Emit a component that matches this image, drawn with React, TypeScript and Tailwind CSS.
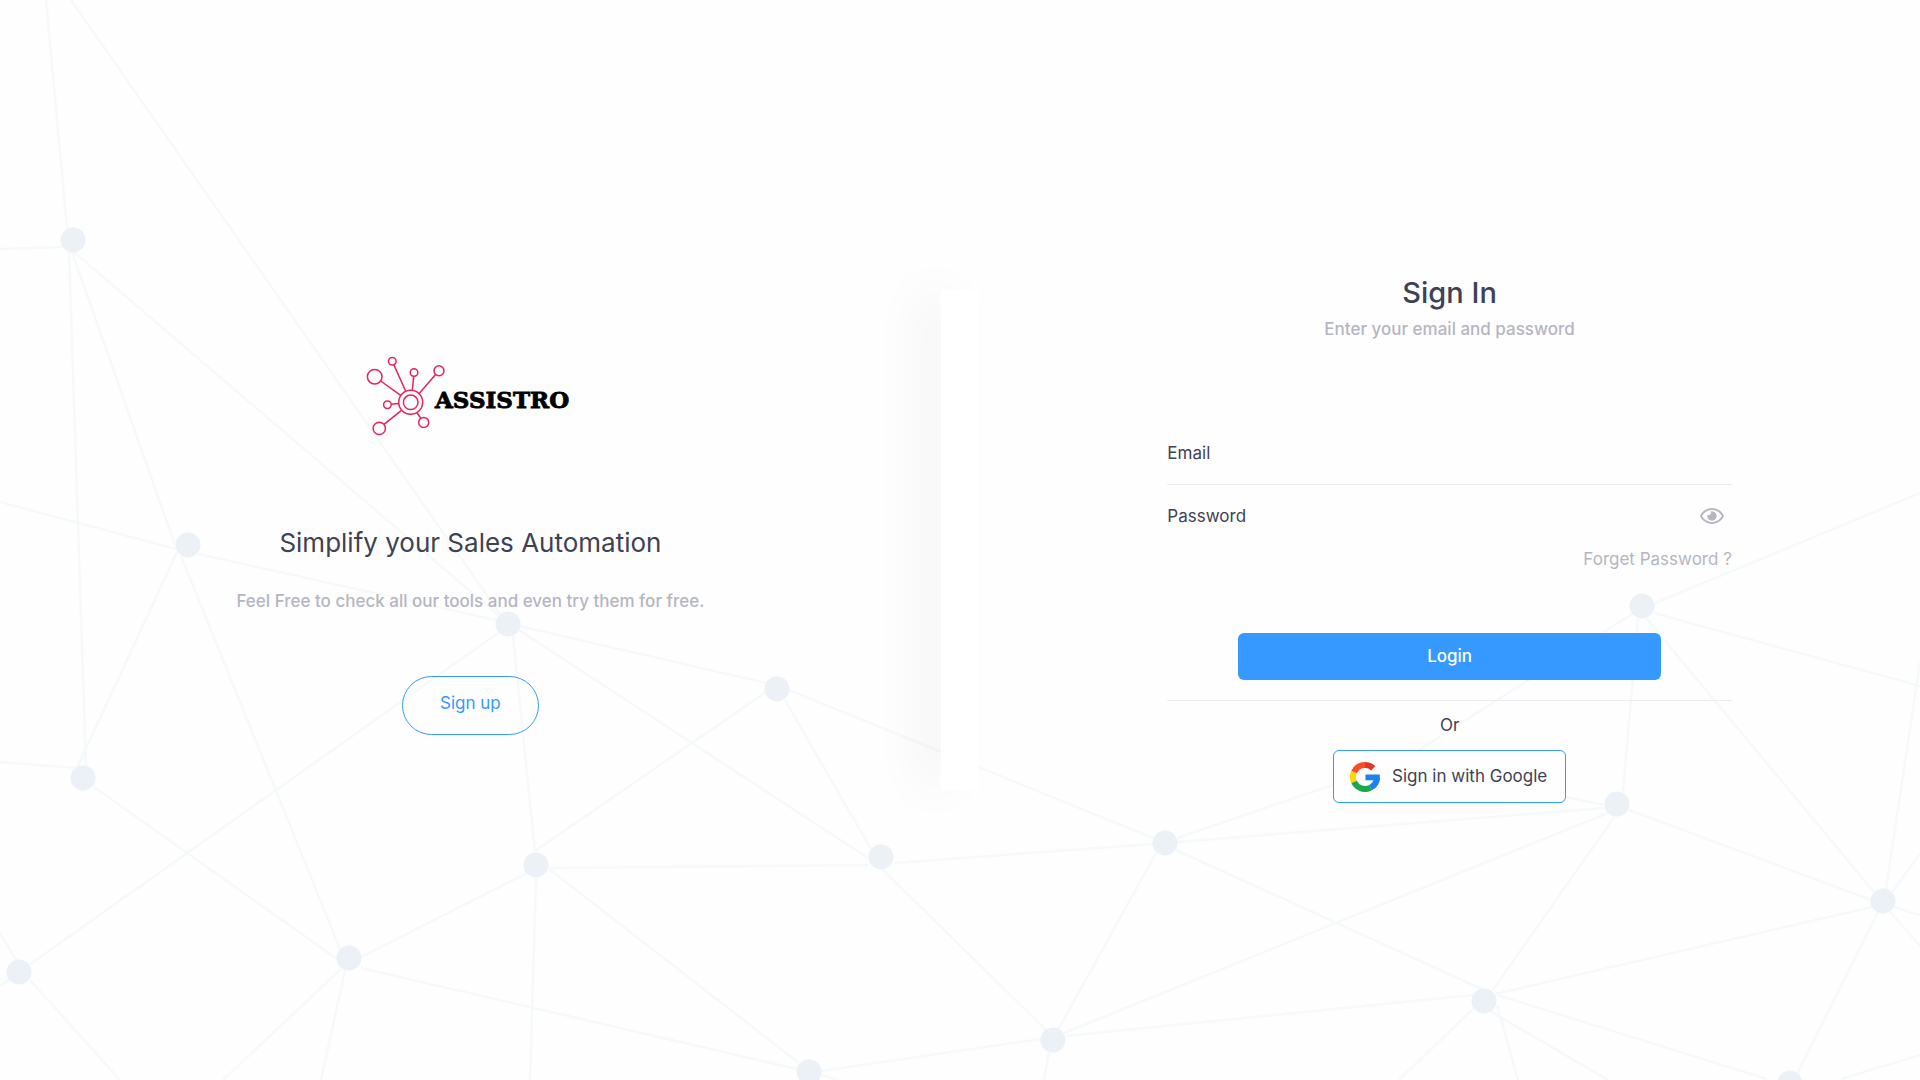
import { useState } from "react"
import { FaRegEye, FaRegEyeSlash } from "react-icons/fa"

const nodes = [
  [73, 240], [188, 545], [83, 778], [19, 972], [349, 958], [508, 624],
  [536, 865], [777, 689], [881, 857], [1165, 843], [1053, 1040], [809, 1072],
  [1642, 606], [1617, 804], [1883, 901], [1484, 1001], [1790, 1083],
]

const edges = [
  [46, 0, 67, 228], [0, 249, 62, 247], [71, 0, 500, 614], [74, 252, 498, 615],
  [69, 252, 86, 767], [72, 252, 175, 545], [0, 502, 176, 549], [177, 552, 77, 768],
  [181, 556, 340, 949], [198, 554, 496, 620], [0, 762, 77, 768], [94, 787, 337, 959],
  [0, 933, 16, 960], [0, 986, 10, 979], [29, 965, 498, 633], [30, 980, 120, 1080],
  [341, 969, 223, 1080], [345, 970, 321, 1080], [361, 968, 797, 1069], [361, 957, 527, 873],
  [513, 636, 535, 852], [519, 626, 766, 683], [519, 630, 868, 858], [535, 851, 766, 692],
  [785, 700, 871, 849], [549, 868, 868, 865], [549, 869, 799, 1063], [536, 878, 530, 1080],
  [789, 690, 1153, 838], [883, 870, 1046, 1030], [894, 863, 1153, 844], [1177, 838, 1400, 762],
  [1177, 842, 1605, 808], [1176, 850, 1484, 990], [1156, 853, 1058, 1030], [1064, 1033, 1608, 813],
  [1066, 1036, 1473, 995], [1041, 1039, 821, 1071], [1049, 1052, 1044, 1080], [821, 1075, 838, 1080],
  [1400, 762, 1632, 614], [1400, 764, 1605, 805], [1655, 603, 1920, 493], [1654, 613, 1920, 686],
  [1638, 619, 1623, 792], [1646, 618, 1874, 892], [1629, 810, 1871, 900], [1615, 816, 1493, 990],
  [1920, 662, 1886, 889], [1920, 854, 1892, 892], [1894, 907, 1920, 915], [1890, 912, 1920, 946],
  [1872, 907, 1495, 994], [1878, 912, 1797, 1074], [1474, 1008, 1399, 1080], [1497, 995, 1767, 1079],
  [1490, 1011, 1608, 1080], [1497, 1005, 1518, 1080], [1841, 1079, 1920, 1055],
]

function NetworkBackground() {
  return (
    <svg
      className="absolute inset-0 -z-10 h-full w-full"
      viewBox="0 0 1920 1080"
      preserveAspectRatio="xMidYMid slice"
      aria-hidden="true"
    >
      <g stroke="#f6f9fa" strokeWidth="2.5">
        {edges.map(([x1, y1, x2, y2], i) => (
          <line key={i} x1={x1} y1={y1} x2={x2} y2={y2} />
        ))}
      </g>
      <g fill="#ebf1f7">
        {nodes.map(([cx, cy], i) => (
          <circle key={i} cx={cx} cy={cy} r="12.5" />
        ))}
      </g>
    </svg>
  )
}

function Logo() {
  return (
    <svg width="240" height="110" viewBox="0 0 240 110" role="img" aria-label="Assistro">
      <g fill="none" stroke="#e8235a" strokeWidth="1.5">
        <circle cx="60.7" cy="62.3" r="12" />
        <circle cx="60.7" cy="62.3" r="7.3" />
        <circle cx="24.7" cy="36.7" r="7.3" />
        <circle cx="42.3" cy="21.3" r="3.8" />
        <circle cx="64" cy="32.5" r="3.8" />
        <circle cx="89" cy="30.7" r="5" />
        <circle cx="37.4" cy="64.7" r="3.8" />
        <circle cx="29.3" cy="88.4" r="6.1" />
        <circle cx="73.7" cy="82.4" r="5" />
        <path d="M30.7 41 50.7 55.3M43.9 24.9 55.7 51.3M63.7 36.4 62.3 50.4M85.6 34.4 69.2 53.5M41.2 64.2 48.8 63.4M34 84.4 51.5 70.3M67 72.8 70.8 78.2" />
      </g>
      <text
        x="85"
        y="68"
        fontFamily="'DejaVu Serif', serif"
        fontWeight="700"
        fontSize="23"
        stroke="#000"
        strokeWidth="0.8"
      >
        ASSISTRO
      </text>
    </svg>
  )
}

function GoogleIcon() {
  return (
    <svg width="30" height="30" viewBox="0 0 30 30" fill="none" strokeWidth="6" aria-hidden="true">
      <path stroke="#fdd60f" d="M4.1 9.9A12 12 0 0 0 4.1 20.1" />
      <path stroke="#ff4b26" d="M4.1 9.9A12 12 0 0 1 15 3" />
      <path stroke="#dc382b" d="M15 3A12 12 0 0 1 23.2 6.2" />
      <path stroke="#1aa94c" d="M4.1 20.1A12 12 0 0 0 20.6 25.6" />
      <path stroke="#1d82ea" d="M20.6 25.6A12 12 0 0 0 27 15.5" />
      <path fill="#1d82ea" d="M15.5 12.5H29.8V18.3H15.5z" />
    </svg>
  )
}

export default function App() {
  const [showPassword, setShowPassword] = useState(false)

  return (
    <main className="relative isolate flex min-h-screen items-center overflow-hidden bg-[#fefefe] font-['Inter',sans-serif] text-[17px] text-[#3f4254]">
      <NetworkBackground />

      <section className="flex flex-1 flex-col items-center pb-1.5 text-center">
        <Logo />
        <h2 className="mt-[75px] text-[26px] leading-9">Simplify your Sales Automation</h2>
        <p className="mt-7 leading-6 font-medium text-[#b5b5c3]">
          Feel Free to check all our tools and even try them for free.
        </p>
        <a
          href="#signup"
          className="mt-[63px] flex h-[59px] w-[137px] items-center justify-center rounded-full border border-[#3699ff] pb-0.5 text-[#3699ff]"
        >
          Sign up
        </a>
      </section>

      <div className="h-[500px] w-[2%] bg-white shadow-[-25px_0_50px_rgba(0,0,0,0.04)]" />

      <section className="flex flex-1 justify-center">
        <form className="flex w-3/5 flex-col items-center" onSubmit={(e) => e.preventDefault()}>
          <h1 className="text-[29px] leading-8 font-medium">Sign In</h1>
          <p className="mt-2 leading-6 font-medium text-[#b5b5c3]">Enter your email and password</p>

          <input
            type="email"
            aria-label="Email"
            placeholder="Email"
            className="mt-20 h-16 w-full border-b border-[#ebedf3] bg-transparent outline-none placeholder:text-[#3f4254]"
          />
          <div className="flex h-[62px] w-full items-center pr-2">
            <input
              type={showPassword ? "text" : "password"}
              aria-label="Password"
              placeholder="Password"
              className="h-full min-w-0 flex-1 bg-transparent outline-none placeholder:text-[#3f4254]"
            />
            <button
              type="button"
              aria-label="Show password"
              className="text-[#b5b5c3]"
              onClick={() => setShowPassword(!showPassword)}
            >
              {showPassword ? <FaRegEyeSlash size={24} /> : <FaRegEye size={24} />}
            </button>
          </div>
          <a href="#forgot" className="self-end leading-6 text-[#b5b5c3]">
            Forget Password ?
          </a>

          <button
            type="submit"
            className="mt-[62px] h-[47px] w-3/4 rounded-md bg-[#3699ff] font-medium text-white"
          >
            Login
          </button>
          <hr className="mt-5 w-full border-[#ebedf3]" />
          <p className="mt-3 leading-6">Or</p>
          <button
            type="button"
            className="mt-[13px] flex h-[53px] w-[233px] items-center gap-3 rounded-md border border-[#3699ff] bg-[#fefefe] pl-4"
          >
            <GoogleIcon />
            <span>Sign in with Google</span>
          </button>
        </form>
      </section>
    </main>
  )
}
